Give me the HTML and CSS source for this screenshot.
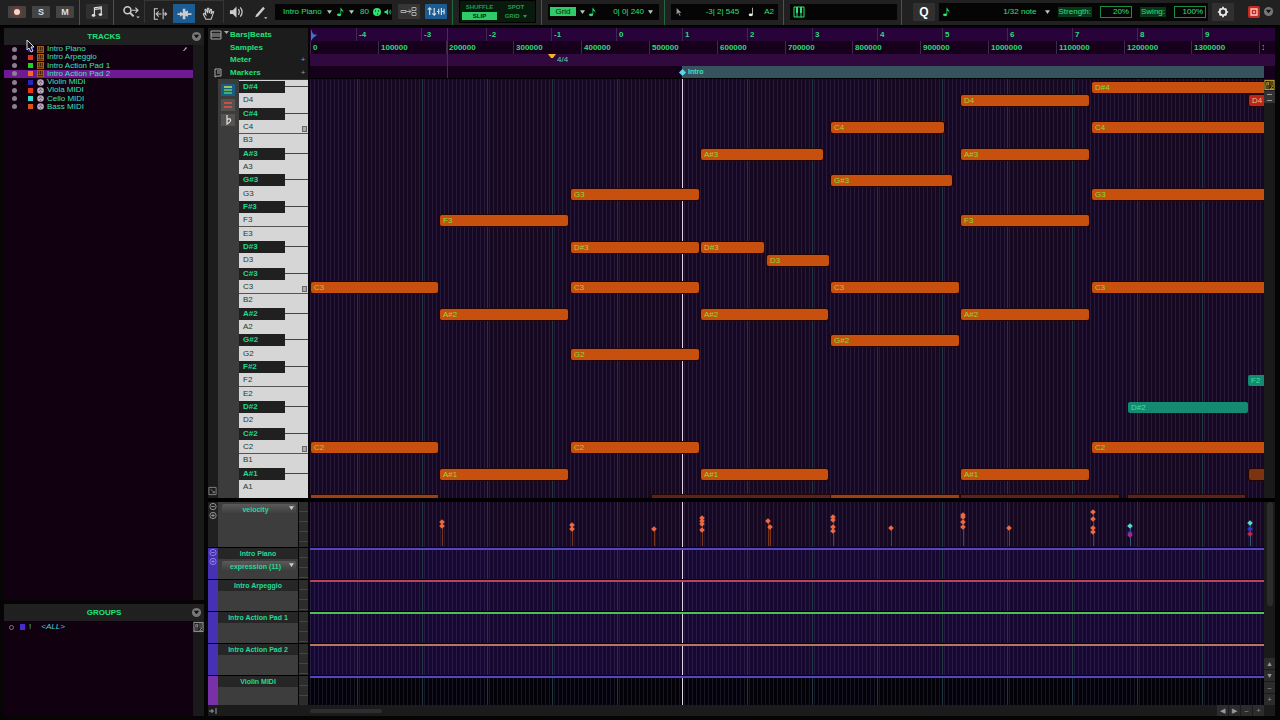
FILE: index.html
```html
<!DOCTYPE html>
<html lang="en">
<head>
    <meta charset="utf-8" />
    <link rel="stylesheet" href="styles.css">
    <title>MIDI Editor</title>
</head>

<body>
    <!-- shared icons -->
    <svg class="defs" width="0" height="0" aria-hidden="true">
        <symbol id="i-note8" viewBox="0 0 10 14"><ellipse cx="3" cy="11" rx="3" ry="2" /><path d="M5 11V1h1c0 3 4 3 3 8c0-3-2-3-3-4v6z" /></symbol>
        <symbol id="i-note4" viewBox="0 0 10 14"><ellipse cx="4" cy="11" rx="3" ry="2" /><path d="M6 11V1h1v10z" /></symbol>
        <symbol id="i-down" viewBox="0 0 8 6"><path d="M0 0h8L4 6z" /></symbol>
        <symbol id="i-menu" viewBox="0 0 12 12"><circle cx="6" cy="6" r="5" fill="#777" /><path d="M3 4h6L6 8z" fill="#111" /></symbol>
        <symbol id="i-speaker" viewBox="0 0 16 14"><path d="M1 5h3l4-4v12L4 9H1z" /><path d="M10 4q2 3 0 6M12 2q4 5 0 10" fill="none" stroke="currentColor" stroke-width="1.3" /></symbol>
        <symbol id="i-az" viewBox="0 0 12 12"><rect x="1" y="1" width="10" height="10" fill="#111" stroke="currentColor" /><path d="M3 6V3h2v3M3 5h2M7 7h3l-3 3h3" fill="none" stroke="currentColor" stroke-width=".9" /><path d="M6 1h5v5H6zM1 6h5v5H1z" opacity=".35" /></symbol>
        <symbol id="i-minus" viewBox="0 0 10 10"><circle cx="5" cy="5" r="3.500" fill="none" stroke="currentColor" /><path d="M3 5h4" stroke="currentColor" /></symbol>
        <symbol id="i-plus" viewBox="0 0 10 10"><circle cx="5" cy="5" r="3.500" fill="none" stroke="currentColor" /><path d="M3 5h4M5 3v4" stroke="currentColor" /></symbol>
        <symbol id="i-inst" viewBox="0 0 8 8"><rect width="8" height="8" fill="#a8621e" /><path d="M2 1v4M4 1v4M6 1v4M1 6.500h6" stroke="#2a1405" /></symbol>
        <symbol id="i-midi" viewBox="0 0 8 8"><circle cx="4" cy="4" r="3.800" fill="#b9aebd" /><path d="M2 4h1M5 4h1M3 2.500h2M3.500 6h1" stroke="#3a2a3d" stroke-width=".9" /></symbol>
    </svg>

    <header class="toolbar">
        <div class="group rsm">
            <button type="button" class="btn small" aria-label="Record"><span class="rec"></span></button>
            <button type="button" class="btn small">S</button>
            <button type="button" class="btn small">M</button>
        </div>
        <div class="group notation">
            <button type="button" class="btn" aria-label="Notation"><svg class="ico" viewBox="0 0 14 14"><path d="M4 11V2l8-1v9" fill="none" stroke="currentColor" stroke-width="1.400" /><path d="M4 4l8-1" stroke="currentColor" stroke-width="1.400" /><ellipse cx="3" cy="11" rx="2.200" ry="1.600" /><ellipse cx="11" cy="10" rx="2.200" ry="1.600" /></svg></button>
        </div>
        <div class="group main-group">
            <div class="tools">
                <button type="button" class="tool zoomer" aria-label="Zoomer"><svg viewBox="0 0 20 16"><circle cx="6" cy="6" r="4" fill="none" stroke="currentColor" stroke-width="1.800" /><path d="M9 9l4 4" stroke="currentColor" stroke-width="2.400" /><path d="M11 6h7M15 3l3 3-3 3" fill="none" stroke="currentColor" stroke-width="1.300" /><path d="M16 13h4l-2 2z" /></svg></button>
                <div class="smart">
                    <button type="button" class="tool" aria-label="Trim"><svg viewBox="0 0 16 16"><path d="M5 2H1v12h4M11 2v12M3 8h6M11 8h4M6 5L3 8l3 3M13 6l2 2-2 2" fill="none" stroke="currentColor" stroke-width="1.200" /></svg></button>
                    <button type="button" class="tool on" aria-label="Selector"><svg viewBox="0 0 16 16"><path d="M0 7h3V5l3 2V2h3v3l3-1v3h4v2h-4v2l-3-1v4H6V9l-3 2V9H0z" /></svg></button>
                    <button type="button" class="tool" aria-label="Grabber"><svg viewBox="0 0 16 16"><path d="M5 14L2 8l1-1 2 2L4 3l1-.500L7 7V1.500h1.300L9 7l1.500-4.500 1 .500L11 8l2-3 1 .500L12 11l-1 3z" fill="none" stroke="currentColor" stroke-width="1.200" /></svg></button>
                </div>
                <button type="button" class="tool scrub" aria-label="Scrubber"><svg viewBox="0 0 16 14"><use href="#i-speaker" /></svg></button>
                <button type="button" class="tool pencil" aria-label="Pencil"><svg viewBox="0 0 16 16"><path d="M2 14l1-3 8-9 2 2-8 9z" /><path d="M12 14h4l-2 2z" /></svg></button>
            </div>
            <div class="display track-display">
                <select class="pick" aria-label="Default track"><option>Intro Piano</option></select>
                <svg class="tri" aria-hidden="true"><use href="#i-down" /></svg>
                <svg class="note"><use href="#i-note8" /></svg>
                <svg class="tri" aria-hidden="true"><use href="#i-down" /></svg>
                <input class="vel" type="text" value="80" aria-label="Default velocity" />
                <svg class="mini" viewBox="0 0 8 8"><circle cx="4" cy="4" r="4" /><path d="M2 3h1M5 3h1M4 6h1" stroke="#050505" /></svg>
                <svg class="mini" viewBox="0 0 14 14"><use href="#i-speaker" /></svg>
            </div>
            <button type="button" class="btn mirror" aria-label="Mirrored editing"><svg viewBox="0 0 18 10"><path d="M1 4h5v2H1zM12 1h4v3h-4zM12 6h4v3h-4zM6 5h5M9 3l2 2-2 2" fill="none" stroke="currentColor" /></svg></button>
            <button type="button" class="btn lit" aria-label="Link timeline and edit selection"><svg viewBox="0 0 20 12"><path d="M3 10V2M1 4l2-2 2 2M8 2v8M6 8l2 2 2-2M11 6h3M13 3v6M16 2v8M19 3v6M16 6h3" fill="none" stroke="currentColor" stroke-width="1.300" /></svg></button>
        </div>
        <div class="group modes-group">
            <div class="modes">
                <button type="button">SHUFFLE</button>
                <button type="button">SPOT</button>
                <button type="button" class="active">SLIP</button>
                <button type="button">GRID <svg class="tri" aria-hidden="true"><use href="#i-down" /></svg></button>
            </div>
        </div>
        <div class="group">
            <div class="display grid-display">
                <button type="button" class="grid-on">Grid</button>
                <svg class="tri"><use href="#i-down" /></svg>
                <svg class="note"><use href="#i-note8" /></svg>
                <select class="pick right" aria-label="Grid value"><option>0| 0| 240</option></select>
                <svg class="tri"><use href="#i-down" /></svg>
            </div>
        </div>
        <div class="group">
            <div class="display cursor-display">
                <svg class="mini grey" viewBox="0 0 8 10"><path d="M1 0l6 6H4l2 3-1 1-2-4-2 2z" /></svg>
                <span class="pos">-3| 2| 545</span>
                <svg class="note white"><use href="#i-note4" /></svg>
                <span>A2</span>
            </div>
        </div>
        <div class="group midi-in">
            <div class="display">
                <svg class="keys-ico" viewBox="0 0 12 12"><path d="M1 1h10v10H1zM4 6v5M8 6v5" fill="none" stroke="currentColor" /><path d="M3 1h2v6H3zM7 1h2v6H7z" /></svg>
            </div>
        </div>
        <div class="group quantize">
            <button type="button" class="btn q">Q</button>
            <div class="display q-display">
                <svg class="note"><use href="#i-note8" /></svg>
                <select class="pick right" aria-label="Quantize grid"><option>1/32 note</option></select>
                <svg class="tri grey"><use href="#i-down" /></svg>
                <label for="strength">Strength:</label>
                <input class="boxed" type="text" id="strength" value="20%" />
                <label for="swing">Swing:</label>
                <input class="boxed" type="text" id="swing" value="100%" />
            </div>
            <button type="button" class="btn gear" aria-label="Quantize settings"><svg class="ico" viewBox="0 0 14 14"><circle cx="7" cy="7" r="3.800" fill="none" stroke="currentColor" stroke-width="2" /><path d="M7 1v2M7 11v2M1 7h2M11 7h2M3 3l1 1M10 10l1 1M11 3l-1 1M4 10l-1 1" stroke="currentColor" stroke-width="2" /></svg></button>
            <button type="button" class="target" aria-label="Target"><svg viewBox="0 0 12 12"><path d="M3 3h6v6H3zM5 6h2" fill="none" stroke="#ffc9c0" stroke-width="1.300" /></svg></button>
            <button type="button" class="menu" aria-label="Toolbar menu"><svg><use href="#i-menu" /></svg></button>
        </div>
    </header>

    <main class="workspace">
        <aside class="side">
            <section class="panel tracks">
                <div class="panel-head"><h2>TRACKS</h2><button type="button" class="menu" aria-label="Tracks menu"><svg><use href="#i-menu" /></svg></button></div>
                <div class="panel-body">
                    <ul id="trackList" class="track-list"></ul>
                    <div class="gutter"></div>
                </div>
            </section>
            <section class="panel groups">
                <div class="panel-head"><h2>GROUPS</h2><button type="button" class="menu" aria-label="Groups menu"><svg><use href="#i-menu" /></svg></button></div>
                <div class="panel-body">
                    <ul class="group-list"><li><span class="ring"></span><span class="swatch blue"></span><span>!</span><em>&lt;ALL&gt;</em></li></ul>
                    <div class="gutter"><svg class="az"><use href="#i-az" /></svg></div>
                </div>
            </section>
        </aside>

        <section class="editor">
            <div class="row ruler">
                <div class="ruler-name"><svg class="rico" viewBox="0 0 20 10"><path d="M1 1h10v8H1zM1 4h10M1 6h10" fill="none" stroke="currentColor" /><path d="M14 1h5l-2.500 3z" /></svg><span>Bars|Beats</span></div>
                <div class="line bars" id="bars"><svg class="flag" viewBox="0 0 6 12"><path d="M0 0l2 5 4 1-4 3-2 3z" /></svg><span class="edit-line"></span></div>
                <div class="end bars"></div>
            </div>
            <div class="row ruler">
                <div class="ruler-name"><span>Samples</span></div>
                <div class="line samples" id="samples"><span class="edit-line"></span></div>
                <div class="end samples"></div>
            </div>
            <div class="row ruler meter-row">
                <div class="ruler-name"><span>Meter</span><button type="button" aria-label="Add meter">+</button></div>
                <div class="line meter"><svg class="meter-mark" viewBox="0 0 8 4"><path d="M0 0h8L5 4H3z" /></svg><span class="meter-text">4/4</span><span class="edit-line"></span></div>
                <div class="end meter"></div>
            </div>
            <div class="row ruler">
                <div class="ruler-name"><svg class="rico" viewBox="0 0 20 10"><path d="M5 1h6v7H7L5 9zM7 3h3M7 5h3" fill="none" stroke="currentColor" /></svg><span>Markers</span><button type="button" aria-label="Add marker">+</button></div>
                <div class="line markers"><div class="marker"><i class="diamond"></i>Intro</div><span class="edit-line"></span></div>
                <div class="end samples"></div>
            </div>

            <div class="row roll">
                <div class="roll-side">
                    <div class="dark-col"><svg viewBox="0 0 10 10"><path d="M1 1h8v8H1zM3 3l4 4M7 5v2H5" fill="none" stroke="currentColor" /></svg></div>
                    <div class="view-btns">
                        <button type="button" class="lit" aria-label="Superimposed view"><svg viewBox="0 0 12 10"><path d="M2 2h8" stroke="#d8e04a" stroke-width="1.500" /><path d="M2 5h8" stroke="#7ec84a" stroke-width="1.500" /><path d="M2 8h8" stroke="#4ac878" stroke-width="1.500" /></svg></button>
                        <button type="button" aria-label="Colour by track"><svg viewBox="0 0 12 10"><path d="M2 3h8M2 7h8" stroke="#c4504c" stroke-width="2" /></svg></button>
                        <button type="button" aria-label="Notation view"><svg viewBox="0 0 12 10"><path d="M5 0v9q5-3 3-5q-1-1-3 1" fill="none" stroke="currentColor" stroke-width="1.300" /></svg></button>
                    </div>
                    <div class="keys" id="keys"></div>
                </div>
                <div class="line notes grid-lines" id="notes"><span class="playhead"></span></div>
                <div class="end roll-end">
                    <svg class="az yellow"><use href="#i-az" /></svg>
                    <button type="button" aria-label="Taller notes"></button>
                    <button type="button" aria-label="Shorter notes"></button>
                </div>
            </div>

            <div class="lanes">
                <div id="lanes"></div>
                <div class="lane-scroll">
                    <div class="thumb"></div>
                    <button type="button" aria-label="Scroll up">▲</button>
                    <button type="button" aria-label="Scroll down">▼</button>
                    <button type="button" aria-label="Zoom out vertically">–</button>
                    <button type="button" aria-label="Zoom in vertically">+</button>
                </div>
            </div>
            <div class="hscroll">
                <svg class="collapse" viewBox="0 0 10 8"><path d="M1 4h5M4 2v4M8 1v6" stroke="currentColor" /></svg>
                <div class="track"><div class="thumb"></div></div>
                <button type="button" aria-label="Scroll left">◀</button>
                <button type="button" aria-label="Scroll right">▶</button>
                <button type="button" aria-label="Zoom out">–</button>
                <button type="button" aria-label="Zoom in">+</button>
            </div>
        </section>
    </main>

    <svg class="pointer" viewBox="0 0 9 14" aria-hidden="true"><path d="M1 1v10l2-2 2 4 2-1-2-4h3z" fill="#111" stroke="#ddd" /></svg>

    <script>
        const names = ["C", "C#", "D", "D#", "E", "F", "F#", "G", "G#", "A", "A#", "B"];
        const topPitch = 51; // D#4, counting from C0
        const octave = 160;  // height of one octave

        function pitchOf(label) {
            return names.indexOf(label.slice(0, -1)) + 12 * Number(label.slice(-1));
        }
        function rowTop(pitch) {
            return Math.round((topPitch - pitch) * octave / 12);
        }
        function add(parent, tag, className, text) {
            let el = document.createElement(tag);
            el.className = className;
            if (text !== undefined) el.textContent = text;
            parent.appendChild(el);
            return el;
        }

        // track list
        let tracks = [
            ["Intro Piano", "#1d1dc8", "inst"],
            ["Intro Arpeggio", "#e8341c", "inst"],
            ["Intro Action Pad 1", "#22d022", "inst"],
            ["Intro Action Pad 2", "#f26a1e", "inst"],
            ["Violin MIDI", "#2626b8", "midi"],
            ["Viola MIDI", "#e8341c", "midi"],
            ["Cello MIDI", "#35e0d0", "midi"],
            ["Bass MIDI", "#d8521e", "midi"]
        ];
        let list = document.getElementById("trackList");
        tracks.forEach(function (t, i) {
            let li = add(list, "li", i === 3 ? "selected" : "");
            li.innerHTML = '<span class="dot"></span><span class="swatch" style="background:' + t[1] + '"></span>' +
                '<svg class="kind"><use href="#i-' + t[2] + '" /></svg><span>' + t[0] + '</span>' +
                (i === 0 ? '<svg class="edit" viewBox="0 0 6 6"><path d="M1 5l3-4 1 1-3 3z" /></svg>' : '');
        });

        // rulers
        let bars = document.getElementById("bars");
        for (let b = -4; b <= 9; b++) {
            add(bars, "span", "tick", b).style.left = Math.round(46 + (b + 4) * 65.1) + "px";
        }
        let samples = document.getElementById("samples");
        for (let s = 0; s <= 14; s++) {
            add(samples, "span", "tick", s * 100000).style.left = Math.round(s * 67.8) + "px";
        }

        // keyboard
        let keys = document.getElementById("keys");
        for (let p = topPitch; p >= 21; p--) {
            let name = names[p % 12];
            let black = name.includes("#");
            let cls = black ? "black" : (name === "C" || name === "F" ? "white edge" : "white");
            let key = add(keys, "div", "key " + cls);
            key.style.top = rowTop(p) + "px";
            add(key, "span", "", name + Math.floor(p / 12));
            if (name === "C") add(key, "i", "corner");
        }

        // notes: start, end, pitches, colour
        let notes = [
            [1, 128, "C3 C2"],
            [1, 128, "G#1", "low"],
            [130, 258, "F3 A#2 A#1"],
            [261, 389, "G3 D#3 C3 G2 C2"],
            [342, 520, "G#1", "low dim"],
            [391, 513, "A#3"],
            [391, 454, "D#3"],
            [457, 519, "D3"],
            [391, 518, "A#2 A#1"],
            [521, 634, "C4"],
            [521, 642, "G#3"],
            [521, 649, "C3 G#2"],
            [521, 649, "G#1", "low"],
            [651, 779, "D4 A#3 F3 A#2 A#1"],
            [651, 809, "G#1", "low dim"],
            [782, 0, "D#4 C4 G3 C3 C2"],
            [818, 935, "G#1", "low dim"],
            [818, 938, "D#2", "teal"],
            [938, 0, "F2", "teal"],
            [939, 0, "D4", "red"],
            [939, 0, "A#1", "brown"]
        ];
        let roll = document.getElementById("notes");
        notes.forEach(function (n) {
            n[2].split(" ").forEach(function (label) {
                let plain = /brown|low/.test(n[3]);
                let el = add(roll, "div", "midi-note " + (n[3] || ""), plain ? "" : label);
                el.style.left = n[0] + "px";
                el.style.top = rowTop(pitchOf(label)) + 3 + "px";
                if (n[1]) el.style.width = n[1] - n[0] + "px";
                else el.classList.add("cut");
            });
        });

        // controller lanes
        let lanes = [
            ["", "velocity", "velocity", ""],
            ["Intro Piano", "expression (11)", "blue", "#5844c0"],
            ["Intro Arpeggio", "", "blue", "#b8425a"],
            ["Intro Action Pad 1", "", "blue", "#4fc050"],
            ["Intro Action Pad 2", "", "blue", "#b87858"],
            ["Violin MIDI", "", "violin", "#5844c0"]
        ];
        let box = document.getElementById("lanes");
        lanes.forEach(function (l) {
            let lane = add(box, "div", "lane " + l[2]);
            lane.innerHTML = '<div class="strip">' + (l[1] ? '<svg><use href="#i-minus" /></svg><svg><use href="#i-plus" /></svg>' : '') + '</div>' +
                '<div class="lane-panel">' + (l[0] ? '<h3>' + l[0] + '</h3>' : '') +
                (l[1] ? '<div class="drop"><select aria-label="Controller"><option>' + l[1] + '</option></select><svg class="tri"><use href="#i-down" /></svg></div>' : '') +
                '</div><div class="scale"></div><div class="line grid-lines"><span class="playhead"></span></div>';
            if (l[3]) add(lane.lastChild, "span", "curve").style.background = l[3];
        });

        // velocity stalks: x, heights from the lane top, colours
        let stalks = [
            [132, [21, 25]], [262, [24, 28]], [344, [28]], [392, [17, 20, 23, 29]],
            [458, [20]], [460, [26]], [523, [16, 19, 26, 30]], [581, [27]],
            [653, [14, 16, 21, 26]], [699, [27]], [783, [11, 18, 27, 31]],
            [820, [25, 32, 34], ["#55dcc8", "#3434cc", "#b42878"]],
            [940, [22, 28, 33], ["#55dcc8", "#3434cc", "#c42840"]]
        ];
        let vel = box.querySelector(".velocity .line");
        stalks.forEach(function (s) {
            let stalk = add(vel, "span", s[2] ? "stalk cool" : "stalk");
            stalk.style.left = s[0] + "px";
            stalk.style.top = s[1][0] + "px";
            s[1].forEach(function (y, i) {
                let d = add(stalk, "i", "diamond");
                d.style.top = y - s[1][0] - 3 + "px";
                if (s[2]) d.style.background = s[2][i];
            });
        });
    </script>
</body>
</html>
```

FILE: styles.css
```css
* {
    box-sizing: border-box;
}
body {
    margin: 0;
    min-height: 100vh;
    display: flex;
    flex-direction: column;
    background: #050505;
    color: #2fdc8c;
    font: 8px/10px "Liberation Sans", Arial, sans-serif;
    overflow-x: hidden;
}
h2, h3, ul {
    margin: 0;
    padding: 0;
    list-style: none;
}
button, select, input {
    font: inherit;
    color: inherit;
    margin: 0;
    padding: 0;
    border: 0;
    background: none;
    appearance: none;
    border-radius: 0;
}
svg {
    fill: currentColor;
    flex: none;
}
.defs {
    position: absolute;
}

/* toolbar */
.toolbar {
    display: flex;
    height: 26px;
    background: #212121;
    border-bottom: 1px solid #000;
}
.group {
    display: flex;
    align-items: center;
    padding: 0 5px 2px 6px;
    border-right: 1px solid #1f6b3c;
}
.rsm {
    gap: 6px;
    padding-left: 8px;
}
.btn {
    display: flex;
    align-items: center;
    justify-content: center;
    width: 22px;
    height: 15px;
    background: #303030;
    color: #ddd;
    border-radius: 1px;
}
.btn.small {
    width: 18px;
    height: 12px;
    background: #444;
    font-weight: bold;
    font-size: 9px;
}
.btn .ico {
    width: 12px;
    height: 12px;
}
.rec {
    width: 6px;
    height: 6px;
    border-radius: 50%;
    background: #eed8d0;
    box-shadow: 0 0 3px 2px #7a3a30;
}
.lit, .tool.on {
    background: #1b5c92;
}
.tools {
    display: flex;
    align-items: center;
    height: 22px;
    margin-right: 3px;
}
.tool {
    display: flex;
    align-items: center;
    justify-content: center;
    width: 26px;
    height: 19px;
    color: #ccc;
}
.tool svg {
    width: 15px;
    height: 14px;
}
.tool.on {
    width: 22px;
}
.scrub, .pencil {
    width: 24px;
}
.zoomer svg {
    width: 18px;
}
.smart {
    display: flex;
    align-items: flex-end;
    width: 80px;
    height: 23px;
    padding: 0 2px;
    border: 1px solid #363636;
    border-bottom: 0;
}
.main-group {
    padding-left: 4px;
    gap: 0;
}
.display {
    display: flex;
    align-items: center;
    height: 16px;
    background: #050505;
    color: #2fe074;
}
.tri {
    width: 5px;
    height: 4px;
}
.display .tri {
    color: #b5c8bb;
}
.note {
    width: 7px;
    height: 10px;
}
.mini {
    width: 8px;
    height: 8px;
}
.grey {
    color: #999;
}
.white {
    color: #eee;
}
.pick.right {
    text-align-last: right;
}
.track-display {
    width: 117px;
    padding-left: 8px;
    gap: 3px;
}
.track-display .pick {
    width: 41px;
}
.track-display .tri + .note {
    margin: 0 2px;
}
.track-display .vel {
    width: 10px;
    margin-left: 3px;
}
.mirror {
    margin: 0 5px 0 6px;
    background: #353535;
    color: #aaa;
}
.mirror svg, .lit svg {
    width: 18px;
    height: 11px;
}
.modes {
    display: grid;
    grid-template-columns: 35px 36px;
    gap: 1px;
    padding: 2px;
    width: 77px;
    background: #071a0d;
    border: 1px solid #000;
    font-size: 6px;
    line-height: 7px;
    font-weight: bold;
    color: #2a9a50;
}
.modes button {
    height: 8px;
}
.modes .active {
    background: #2ecb68;
    color: #06200f;
}
.modes .tri {
    width: 4px;
    height: 3px;
    margin-left: 2px;
}
.grid-display {
    width: 111px;
    padding: 0 6px 0 2px;
    gap: 4px;
}
.grid-on {
    width: 26px;
    height: 9px;
    line-height: 9px;
    background: #2ecb68;
    color: #06200f;
}
.grid-display .pick {
    flex: 1;
    width: 40px;
}
.cursor-display {
    width: 107px;
    padding: 0 4px 0 4px;
    gap: 9px;
}
.cursor-display .pos {
    flex: 1;
    text-align: right;
}
.midi-in, .midi-in .display {
    flex: 1;
}
.midi-in .display {
    padding-left: 3px;
}
.midi-in {
    padding-right: 4px;
}
.keys-ico {
    width: 12px;
    height: 12px;
}
.quantize {
    border: 0;
    padding: 0 6px 2px 11px;
}
.btn.q {
    font-weight: bold;
    font-size: 12px;
    color: #fff;
    height: 18px;
    margin-right: 4px;
}
.q-display {
    width: 269px;
    height: 18px;
    padding: 0 2px 0 4px;
    gap: 8px;
}
.q-display .pick {
    flex: 1;
}
.q-display label {
    padding: 0 1px;
    background: #07371a;
}
.boxed {
    width: 32px;
    height: 12px;
    padding-right: 2px;
    border: 1px solid #1f8a45;
    text-align: right;
}
.btn.gear {
    height: 18px;
    margin: 0 14px 0 4px;
    color: #eee;
}
.target {
    width: 12px;
    height: 12px;
    background: #c42a24;
    border-radius: 2px;
    margin-right: 3px;
    display: flex;
}
.target svg {
    width: 12px;
    height: 12px;
}
.menu, .menu svg {
    display: block;
    width: 11px;
    height: 11px;
}

/* layout */
.workspace {
    flex: 1;
    display: grid;
    grid-template-columns: 200px 1fr;
    gap: 4px;
    padding: 2px 5px 4px 4px;
}
.side {
    display: flex;
    flex-direction: column;
    gap: 4px;
}
.panel {
    display: flex;
    flex-direction: column;
    background: #110010;
}
.tracks {
    flex: 1;
}
.groups {
    height: 112px;
}
.panel-head {
    display: flex;
    align-items: center;
    height: 17px;
    padding-right: 2px;
    background: #202020;
}
.panel-head h2 {
    flex: 1;
    padding-left: 13px;
    text-align: center;
    font-size: 8px;
    color: #22e078;
}
.panel-body {
    flex: 1;
    display: flex;
}
.gutter {
    width: 11px;
    background: #191919;
}
.az {
    display: block;
    width: 11px;
    height: 12px;
    color: #999;
}
.track-list {
    flex: 1;
    display: grid;
    grid-template-rows: repeat(8, 1fr);
    height: 66px;
    color: #3de0b4;
}
.track-list li {
    display: flex;
    align-items: center;
    padding: 0 5px 0 8px;
    line-height: 8px;
}
.track-list .selected {
    background: #6f1a94;
}
.dot {
    width: 5px;
    height: 5px;
    border-radius: 50%;
    background: #8b7f90;
    margin-right: 11px;
}
.swatch {
    width: 5px;
    height: 5px;
    margin-right: 4px;
}
.kind {
    width: 7px;
    height: 7px;
    margin-right: 3px;
}
.edit {
    width: 6px;
    height: 6px;
    margin-left: auto;
    color: #bbb;
}
.group-list {
    flex: 1;
    color: #4fc8d0;
}
.group-list li {
    display: flex;
    align-items: center;
    height: 12px;
    padding-left: 5px;
}
.group-list em {
    margin-left: 10px;
}
.ring {
    width: 5px;
    height: 5px;
    border: 1px solid #777;
    border-radius: 50%;
    margin-right: 6px;
}
.swatch.blue {
    height: 6px;
    background: #4a2cc8;
}

/* editor */
.editor {
    display: flex;
    flex-direction: column;
    min-width: 0;
}
.row {
    display: grid;
    grid-template-columns: 102px 1fr 11px;
}
.line {
    position: relative;
    overflow: hidden;
}
.ruler {
    height: 13px;
}
.meter-row {
    height: 12px;
}
.ruler-name {
    display: flex;
    align-items: center;
    padding-left: 2px;
    margin-right: 2px;
    background: #1c1c1c;
    color: #22e078;
    font-weight: bold;
}
.ruler-name span {
    margin-left: auto;
    width: 78px;
}
.ruler-name button {
    width: 10px;
    margin-left: -10px;
    color: #999;
    font-weight: normal;
}
.rico {
    width: 20px;
    height: 10px;
    margin-right: -20px;
    color: #aaa;
}
.bars {
    background: #27033a;
}
.samples, .markers {
    background: #16001c;
}
.meter {
    background: #300a3e;
}
.markers {
    border-bottom: 1px solid #000;
}
.tick {
    position: absolute;
    top: 0;
    bottom: 0;
    padding-left: 2px;
    border-left: 1px solid #3c2a4c;
    line-height: 13px;
    font-weight: bold;
    color: #2fd87c;
}
.flag {
    position: absolute;
    left: 1px;
    top: 1px;
    width: 6px;
    height: 12px;
    color: #3a78c8;
}
.edit-line {
    position: absolute;
    left: 137px;
    top: 0;
    bottom: 0;
    width: 1px;
    background: #801832;
}
.meter-mark {
    position: absolute;
    left: 238px;
    top: 0;
    width: 8px;
    height: 4px;
    color: #f0b428;
}
.meter-text {
    position: absolute;
    left: 247px;
    top: 1px;
    color: #48d8b0;
}
.marker {
    margin-left: 372px;
    height: 12px;
    padding-left: 6px;
    line-height: 12px;
    font-size: 7px;
    font-weight: bold;
    background: #35525e;
    color: #3ee0c0;
}
.diamond {
    position: absolute;
    width: 4px;
    height: 4px;
    transform: rotate(45deg);
}
.marker .diamond {
    left: 370px;
    top: 4px;
    width: 5px;
    height: 5px;
    background: #50d8ee;
}

.roll {
    flex: 1;
    min-height: 418px;
}
.roll-side {
    display: grid;
    grid-template-columns: 10px 21px 1fr;
    margin-right: 2px;
    background: #3c3c3c;
}
.dark-col {
    display: flex;
    align-items: flex-end;
    padding-bottom: 2px;
    background: #1c1c1c;
    color: #888;
}
.dark-col svg {
    width: 9px;
    height: 10px;
}
.view-btns {
    display: flex;
    flex-direction: column;
    gap: 3px;
    padding: 5px 4px 0 3px;
}
.view-btns button {
    display: flex;
    align-items: center;
    justify-content: center;
    height: 12px;
    background: #575252;
    color: #ddd;
}
.view-btns .lit {
    background: #175d86;
}
.view-btns svg {
    width: 12px;
    height: 10px;
}
.keys {
    position: relative;
    overflow: hidden;
    background: #d6d6d6;
    border-top: 1px solid #333;
}
.key {
    position: absolute;
    left: 0;
    right: 0;
    height: 14px;
    line-height: 14px;
    color: #1e3a30;
}
.key span {
    display: block;
    padding-left: 4px;
}
.key.edge {
    border-bottom: 1px solid #555;
}
.key.black {
    background: linear-gradient(#444, #444) 0 6px / 100% 1px no-repeat;
    z-index: 1;
}
.key.black span {
    width: 46px;
    height: 12px;
    margin-top: 1px;
    line-height: 12px;
    background: #202020;
    color: #1fdc90;
    font-weight: bold;
}
.corner {
    position: absolute;
    right: 1px;
    bottom: 1px;
    width: 5px;
    height: 6px;
    border: 1px solid #666;
    background: #aaa;
}
/* one tile per bar, sixteen divisions in each */
.grid-lines {
    background-color: #170822;
    background-image:
        linear-gradient(to right, #20383f 1px, transparent 1px),
        repeating-linear-gradient(to right, transparent 0 2px, rgba(95, 90, 140, .22) 2px 3px, transparent 3px 4px);
    background-size: 65px 100%;
    background-position: 47px 0;
}
.playhead {
    position: absolute;
    left: 372px;
    top: 0;
    bottom: 0;
    width: 1px;
    background: #e0d4e4;
}
.midi-note {
    position: absolute;
    height: 11px;
    padding-left: 3px;
    line-height: 11px;
    border-radius: 2px;
    background: #c8500f;
    color: #86dc38;
    box-shadow: 0 0 0 1px #260506;
    overflow: hidden;
}
.midi-note.cut {
    right: 0;
    border-radius: 2px 0 0 2px;
}
.midi-note.teal {
    background: #148a72;
    color: #3ce0a0;
    box-shadow: none;
}
.midi-note.red {
    background: #c4201c;
    color: #c8d070;
}
.midi-note.brown {
    background: #7a3410;
}
.midi-note.low {
    border-radius: 0;
    background: #9c4018;
}
.midi-note.dim {
    background: #5c2418;
}
.roll-end {
    background: #1a1a1a;
}
.az.yellow {
    color: #c8a832;
}
.roll-end button {
    display: block;
    width: 11px;
    height: 6px;
    background: linear-gradient(#999, #999) 50% 50% / 5px 1px no-repeat #333;
}

/* controller lanes */
.lanes {
    display: grid;
    grid-template-columns: 1fr 11px;
    border-top: 4px solid #000;
}
.lane {
    display: grid;
    grid-template-columns: 10px 80px 10px 1fr;
    height: 32px;
    border-top: 1px solid #000;
}
.lane.velocity {
    height: 45px;
    border: 0;
}
.lane.violin {
    height: 30px;
}
.lane.blue .line {
    background-color: #170832;
}
.lane.violin .line {
    background-color: #020208;
}
.lane .line {
    margin-left: 2px;
}
.strip {
    background: #4630b4;
    color: #999;
}
.velocity .strip {
    background: #202020;
}
.blue .strip {
    color: #9184dc;
}
.violin .strip {
    background: #7a30a8;
}
.strip svg {
    display: block;
    width: 10px;
    height: 9px;
}
.lane-panel {
    background: #3d3d3d;
    color: #22dc96;
    font-size: 7px;
    font-weight: bold;
    text-align: center;
}
.lane-panel h3 {
    font-size: 7px;
    height: 11px;
    line-height: 11px;
    background: #262626;
}
.drop {
    position: relative;
    height: 11px;
    margin: 2px 2px 0 4px;
    background: linear-gradient(#5a5a5a, #3a3a3a);
    border-radius: 2px;
}
.drop select {
    width: 100%;
    height: 11px;
    padding-right: 7px;
    text-align-last: center;
}
.drop .tri {
    position: absolute;
    right: 2px;
    top: 2px;
    color: #ccc;
}
.scale {
    margin-left: 1px;
    background: repeating-linear-gradient(#2c2c2c 0 9px, #444 9px 10px);
}
.curve {
    position: absolute;
    left: 0;
    right: 0;
    top: 0;
    height: 2px;
}
.stalk {
    position: absolute;
    bottom: 1px;
    width: 1px;
    background: #7a3418;
}
.stalk.cool {
    background: #2a5c80;
}
.stalk .diamond {
    left: -2px;
    background: #f0673c;
}
.lane-scroll {
    display: flex;
    flex-direction: column;
    background: #1a1a1a;
}
.lane-scroll .thumb {
    width: 6px;
    height: 104px;
    margin: 0 auto auto;
    background: #2c2c2c;
    border-radius: 3px;
}
.lane-scroll button, .hscroll button {
    width: 11px;
    height: 11px;
    margin-top: 1px;
    font-size: 7px;
    line-height: 9px;
    background: #2c2c2c;
    color: #999;
}
.hscroll {
    display: flex;
    align-items: center;
    gap: 1px;
    height: 11px;
    padding-right: 11px;
    background: #1b1b1b;
}
.hscroll button {
    margin: 0;
}
.collapse {
    width: 10px;
    height: 8px;
    color: #999;
}
.hscroll .track {
    flex: 1;
    padding-left: 91px;
}
.hscroll .thumb {
    width: 72px;
    height: 4px;
    background: #2e2e2e;
    border-radius: 2px;
}

/* mouse pointer over the track list */
.pointer {
    position: absolute;
    left: 26px;
    top: 39px;
    width: 9px;
    height: 14px;
}
```
